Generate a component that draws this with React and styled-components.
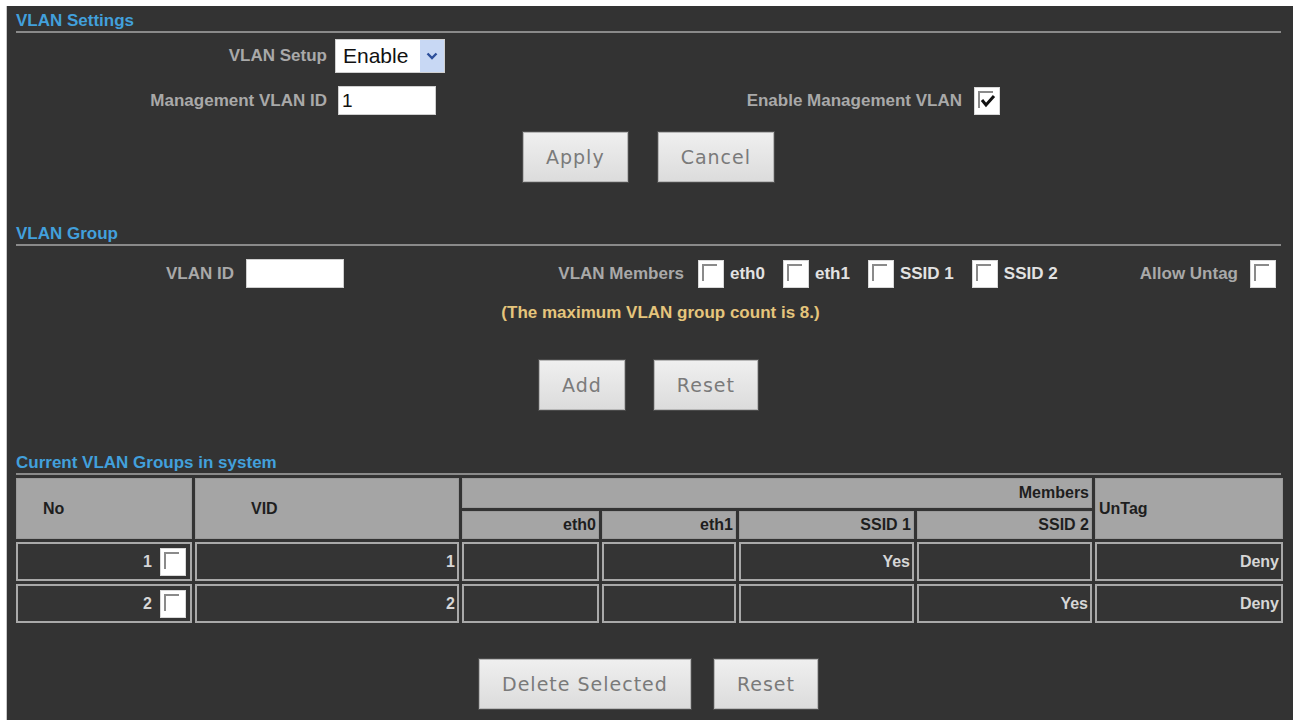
import React from "react";
import styled, { createGlobalStyle } from "styled-components";

const Global = createGlobalStyle`
  html, body { margin: 0; padding: 0; background: #ffffff; }
  body { font-family: "Liberation Sans", Arial, sans-serif; }
`;

const Panel = styled.div`
  box-sizing: border-box;
  margin: 6px 3px 0 6px;
  height: 714px;
  background: #333333;
  padding: 5px 12px 0 9px;
  border-left: 1px solid #c8c8c8;
`;

const Heading = styled.div`
  color: #42a0dc;
  font: bold 17px/20px "Liberation Sans", Arial, sans-serif;
  border-bottom: 2px solid #8a8a8a;
  margin-top: ${(p) => p.$top || 0}px;
`;

const Label = styled.span`
  color: #a9a9a9;
  font: bold 17px/20px "Liberation Sans", Arial, sans-serif;
  text-align: right;
  white-space: nowrap;
`;

const SettingsGrid = styled.div`
  display: grid;
  grid-template-columns: 311px 300px 319px auto;
  column-gap: 8px;
  row-gap: 13px;
  align-items: center;
  margin-top: 6px;
`;

const SelectBox = styled.div`
  box-sizing: border-box;
  width: 110px;
  height: 34px;
  background: #fff;
  border: 1px solid #d0d0d0;
  display: flex;
  align-items: center;
  justify-content: space-between;
  padding-left: 7px;
  font: 21px "Liberation Sans", Arial, sans-serif;
  color: #111;
`;

const SelectArrow = styled.span`
  width: 24px;
  align-self: stretch;
  background: #c8d8f4;
  display: flex;
  align-items: center;
  justify-content: center;
`;

const TextInput = styled.div`
  box-sizing: border-box;
  width: 98px;
  height: 29px;
  background: #fff;
  border: 1px solid #cfcfcf;
  margin-left: ${(p) => p.$offset || 0}px;
  padding-left: 3px;
  font: 19px/27px "Liberation Sans", Arial, sans-serif;
  color: #111;
`;

const Box = styled.span`
  position: relative;
  display: inline-block;
  flex: none;
  box-sizing: border-box;
  width: 26px;
  height: 28px;
  background: #fff;
  border: 1px solid #d8d8d8;
  margin-left: ${(p) => p.$ml || 0}px;
  margin-right: ${(p) => p.$mr || 0}px;
  &::before {
    content: "";
    position: absolute;
    left: 3px;
    top: 3px;
    width: 13px;
    height: 15px;
    border-top: 2px solid #8a8a8a;
    border-left: 2px solid #8a8a8a;
  }
`;

const Check = styled.svg`
  position: absolute;
  left: 5px;
  top: 6px;
`;

function Checkbox({ checked, ...rest }) {
  return (
    <Box {...rest}>
      {checked && (
        <Check width="16" height="14" viewBox="0 0 16 14">
          <path d="M2 6 L6 11 L14 2" fill="none" stroke="#111" strokeWidth="3" />
        </Check>
      )}
    </Box>
  );
}

const ButtonRow = styled.div`
  display: flex;
  justify-content: center;
  gap: ${(p) => p.$gap || 30}px;
  margin-top: ${(p) => p.$top || 0}px;
`;

const Button = styled.div`
  box-sizing: border-box;
  height: 50px;
  padding: 0 22px;
  display: flex;
  align-items: center;
  background: linear-gradient(#efefef, #dcdcdc);
  border: 1px solid #b8b8b8;
  box-shadow: 0 0 0 1px #4a4a4a;
  color: #7a7a7a;
  font: 19px "DejaVu Sans", Verdana, sans-serif;
  letter-spacing: 1px;
`;

const GroupRow = styled.div`
  display: flex;
  align-items: center;
  height: 29px;
  margin-top: 13px;
`;

const FixedLabel = styled(Label)`
  width: ${(p) => p.$w}px;
  margin-right: ${(p) => p.$mr || 0}px;
  flex: none;
`;

const FlexLabel = styled(Label)`
  flex: 1;
  margin-right: 12px;
`;

const Members = styled.div`
  display: flex;
  align-items: center;
  gap: 18px;
`;

const Member = styled.span`
  display: flex;
  align-items: center;
  gap: 6px;
  color: #e2e2e2;
  font: bold 17px/20px "Liberation Sans", Arial, sans-serif;
  white-space: nowrap;
`;

const Note = styled.div`
  margin-top: 15px;
  padding-left: 24px;
  text-align: center;
  color: #e5c57c;
  font: bold 17px/20px "Liberation Sans", Arial, sans-serif;
`;

const Table = styled.table`
  table-layout: fixed;
  width: 1273px;
  border-collapse: separate;
  border-spacing: 3px;
  margin: 0 0 0 -3px;
  font: bold 16px "Liberation Sans", Arial, sans-serif;
`;

const Th = styled.th`
  box-sizing: border-box;
  background: #a5a5a5;
  border: 1px solid #9a9a9a;
  color: #1e1e1e;
  font-weight: bold;
  height: ${(p) => p.$h || 28}px;
  padding: 0 ${(p) => p.$pr ?? 2}px 0 ${(p) => p.$pl ?? 2}px;
  text-align: ${(p) => p.$align || "right"};
  vertical-align: middle;
`;

const Td = styled.td`
  box-sizing: border-box;
  border: 2px solid #a9a9a9;
  background: #343434;
  color: #d6d6d6;
  height: 39px;
  padding: 0 2px;
  text-align: right;
  vertical-align: middle;
`;

const NoCell = styled.span`
  display: inline-flex;
  align-items: center;
  gap: 8px;
  padding-right: 2px;
`;

const cols = [176, 264, 137, 134, 175, 175, 188];

const rows = [
  { no: 1, vid: 1, eth0: "", eth1: "", s1: "Yes", s2: "", untag: "Deny" },
  { no: 2, vid: 2, eth0: "", eth1: "", s1: "", s2: "Yes", untag: "Deny" },
];

export default function App() {
  return (
    <>
      <Global />
      <Panel>
        <Heading>VLAN Settings</Heading>
        <SettingsGrid>
          <Label>VLAN Setup</Label>
          <SelectBox>
            Enable
            <SelectArrow>
              <svg width="12" height="8" viewBox="0 0 12 8">
                <path d="M1.5 1.5 L6 6 L10.5 1.5" fill="none" stroke="#2d4f9a" strokeWidth="2.4" />
              </svg>
            </SelectArrow>
          </SelectBox>
          <span />
          <span />
          <Label>Management VLAN ID</Label>
          <TextInput $offset={3}>1</TextInput>
          <Label>Enable Management VLAN</Label>
          <Checkbox checked $ml={4} />
        </SettingsGrid>
        <ButtonRow $top={17} $gap={30}>
          <Button>Apply</Button>
          <Button>Cancel</Button>
        </ButtonRow>

        <Heading $top={42}>VLAN Group</Heading>
        <GroupRow>
          <FixedLabel $w={218} $mr={12}>VLAN ID</FixedLabel>
          <TextInput />
          <FixedLabel $w={340} $mr={14}>VLAN Members</FixedLabel>
          <Members>
            <Member><Checkbox />eth0</Member>
            <Member><Checkbox />eth1</Member>
            <Member><Checkbox />SSID 1</Member>
            <Member><Checkbox />SSID 2</Member>
          </Members>
          <FlexLabel>Allow Untag</FlexLabel>
          <Checkbox $mr={5} />
        </GroupRow>
        <Note>(The maximum VLAN group count is 8.)</Note>
        <ButtonRow $top={37} $gap={29}>
          <Button>Add</Button>
          <Button>Reset</Button>
        </ButtonRow>

        <Heading $top={43}>Current VLAN Groups in system</Heading>
        <Table>
          <colgroup>
            {cols.map((w, i) => (
              <col key={i} style={{ width: w }} />
            ))}
          </colgroup>
          <thead>
            <tr>
              <Th rowSpan={2} $align="left" $pl={26} $h={30}>No</Th>
              <Th rowSpan={2} $align="left" $pl={55} $h={30}>VID</Th>
              <Th colSpan={4} $h={30}>Members</Th>
              <Th rowSpan={2} $align="left" $pl={3} $h={30}>UnTag</Th>
            </tr>
            <tr>
              <Th>eth0</Th>
              <Th>eth1</Th>
              <Th>SSID 1</Th>
              <Th>SSID 2</Th>
            </tr>
          </thead>
          <tbody>
            {rows.map((r) => (
              <tr key={r.no}>
                <Td>
                  <NoCell>
                    {r.no}
                    <Checkbox />
                  </NoCell>
                </Td>
                <Td>{r.vid}</Td>
                <Td>{r.eth0}</Td>
                <Td>{r.eth1}</Td>
                <Td>{r.s1}</Td>
                <Td>{r.s2}</Td>
                <Td>{r.untag}</Td>
              </tr>
            ))}
          </tbody>
        </Table>
        <ButtonRow $top={33} $gap={23}>
          <Button>Delete Selected</Button>
          <Button>Reset</Button>
        </ButtonRow>
      </Panel>
    </>
  );
}
